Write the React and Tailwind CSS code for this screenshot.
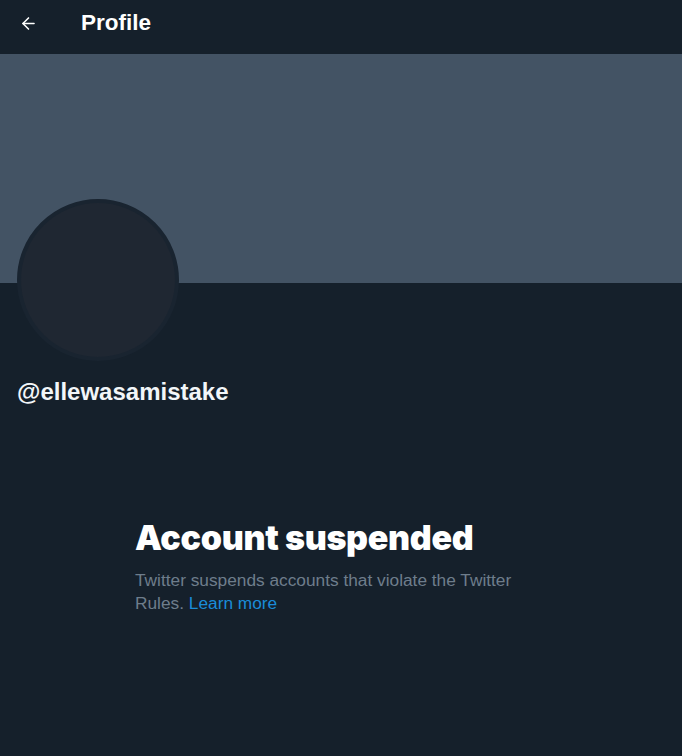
import { ArrowLeft } from 'lucide-react'

export default function App() {
  return (
    <div className="min-h-screen w-[682px] bg-[#15202b] font-['Liberation_Sans',Arial,sans-serif] text-white">
      {/* top bar */}
      <div className="flex h-[53px] items-start px-4 pt-[11px]">
        <div className="flex h-[24px] w-[65px] items-center">
          <ArrowLeft className="ml-[3px] h-[19px] w-[19px] text-white" strokeWidth={2} />
        </div>
        <h2 className="text-[22.5px] font-bold leading-[24px]">Profile</h2>
      </div>

      {/* banner */}
      <div className="mt-px h-[229px] bg-[#435364]" />

      {/* avatar + handle */}
      <div className="px-[17px]">
        <div className="-mt-[84px] h-[162px] w-[162px] rounded-full border-[4px] border-[#192430] bg-[#1f2732]" />
        <div className="mt-[19px] text-[24px] font-bold leading-none text-[#f2f6f9]">@ellewasamistake</div>
      </div>

      {/* suspended notice */}
      <div className="mx-auto mt-[117px] w-[412px]">
        <h1 className="font-['Inter',sans-serif] text-[34px] font-black leading-none tracking-[-0.3px]">Account suspended</h1>
        <p className="mt-[14px] text-[17.3px] leading-[23px] text-[#6e7d8b]">
          Twitter suspends accounts that violate the Twitter Rules. <span className="text-[#1a8cd8]">Learn more</span>
        </p>
      </div>
    </div>
  )
}
